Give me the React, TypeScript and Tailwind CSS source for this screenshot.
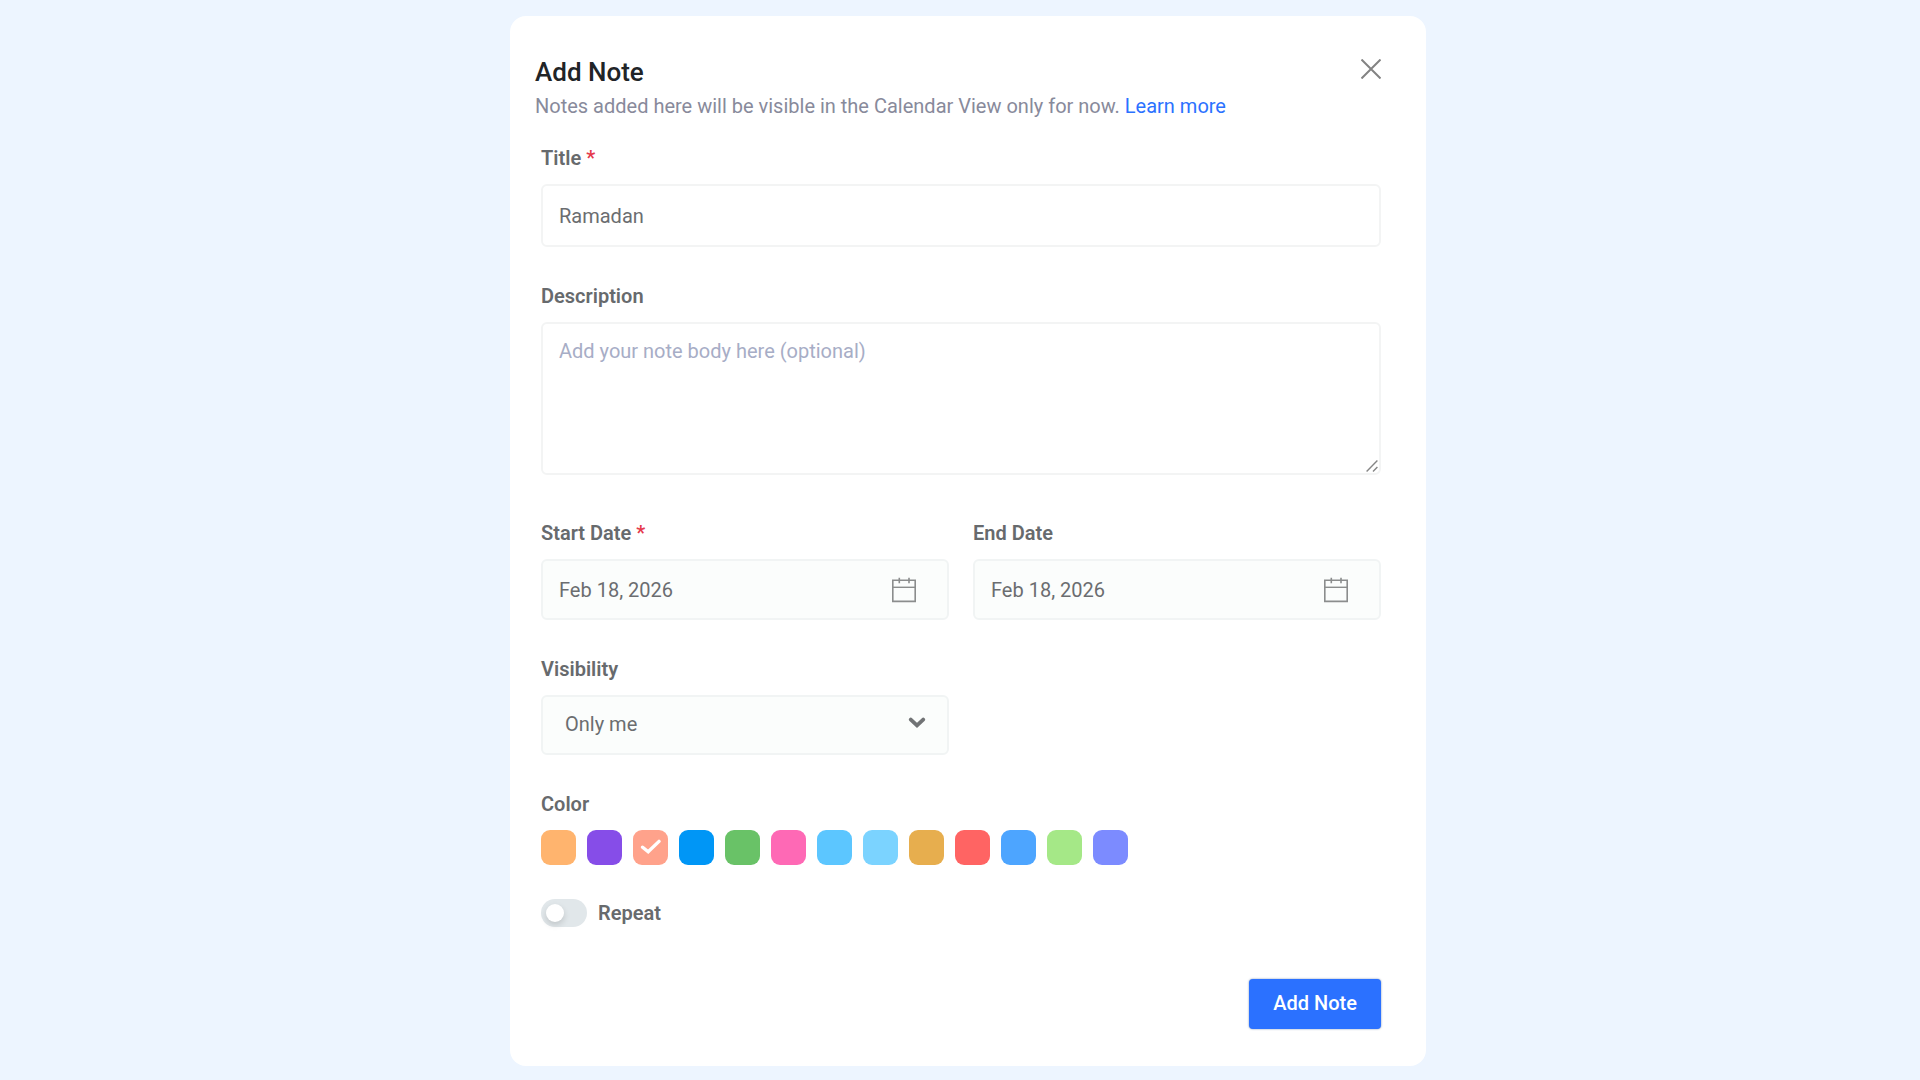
import { useState, type ReactNode } from 'react'
import clsx from 'clsx'

const COLORS = [
  { name: 'Orange', className: 'bg-[#ffb46e]' },
  { name: 'Purple', className: 'bg-[#864de8]' },
  { name: 'Salmon', className: 'bg-[#ffa28b]' },
  { name: 'Blue', className: 'bg-[#0096f6]' },
  { name: 'Green', className: 'bg-[#69c267]' },
  { name: 'Pink', className: 'bg-[#fe69b5]' },
  { name: 'Sky', className: 'bg-[#5cc6ff]' },
  { name: 'Light sky', className: 'bg-[#7bd3ff]' },
  { name: 'Gold', className: 'bg-[#e7ae4e]' },
  { name: 'Red', className: 'bg-[#ff6463]' },
  { name: 'Azure', className: 'bg-[#4da5ff]' },
  { name: 'Lime', className: 'bg-[#a5e887]' },
  { name: 'Indigo', className: 'bg-[#7c8bff]' },
]

function CloseIcon() {
  return (
    <svg viewBox="0 0 20 20" className="size-5" fill="none" stroke="#838383" strokeWidth="2">
      <path d="M0.5 0.5 19.5 19.5M19.5 0.5 0.5 19.5" />
    </svg>
  )
}

function CalendarIcon() {
  return (
    <svg viewBox="0 0 24 26" className="h-[26px] w-6" fill="none" stroke="#8b8d8d">
      <path d="M.8 3.2h22.4v21.2H.8z" strokeWidth="1.6" />
      <path d="M.8 10.3h22.4" strokeWidth="1.4" />
      <path d="M7.3 .8v5.4M17 .8v5.4" strokeWidth="1.6" />
    </svg>
  )
}

function ChevronIcon() {
  return (
    <svg
      viewBox="0 0 18 12"
      className="pointer-events-none absolute top-[22px] right-[23px] h-3 w-[18px]"
      fill="none"
      stroke="#717375"
      strokeWidth="3.8"
    >
      <path d="M2.8 2.6 9 8.4l6.2-5.8" strokeLinecap="round" />
    </svg>
  )
}

function CheckIcon() {
  return (
    <svg
      viewBox="0 0 22 18"
      className="pointer-events-none h-[18px] w-[22px]"
      fill="none"
      stroke="#fff"
      strokeWidth="3.4"
    >
      <path d="M2.6 8.2l5.6 4.6L19 2.4" strokeLinecap="round" />
    </svg>
  )
}

// Larger than the browser's own grip, which is hidden below it
function ResizeGrip() {
  return (
    <svg
      viewBox="0 0 12 12"
      className="pointer-events-none absolute right-[3px] bottom-[3px] size-3"
      fill="none"
      stroke="#858585"
      strokeWidth="1.4"
    >
      <path d="M.6 11.4 11.4.6M7 11.4l4.4-4.4" />
    </svg>
  )
}

function Label({ htmlFor, required, children }: { htmlFor: string; required?: boolean; children: ReactNode }) {
  return (
    <label htmlFor={htmlFor} className="mb-3 block leading-7 font-semibold text-[#676a6d]">
      {children}
      {required && <span className="text-[#e5394b]"> *</span>}
    </label>
  )
}

function DateField({ id, label, required }: { id: string; label: string; required?: boolean }) {
  const [value, setValue] = useState('Feb 18, 2026')

  return (
    <div>
      <Label htmlFor={id} required={required}>
        {label}
      </Label>
      <div className="flex h-[61px] items-center rounded-md border-2 border-[#f1f4f4] bg-[#fbfdfc] pr-[31px] pl-4">
        <input
          id={id}
          type="text"
          value={value}
          onChange={(e) => setValue(e.target.value)}
          className="min-w-0 flex-1 bg-transparent outline-none"
        />
        <button type="button" aria-label={`Pick ${label}`}>
          <CalendarIcon />
        </button>
      </div>
    </div>
  )
}

export default function App() {
  const [title, setTitle] = useState('Ramadan')
  const [color, setColor] = useState('Salmon')
  const [repeat, setRepeat] = useState(false)

  return (
    <main className="flex min-h-screen justify-center bg-[#edf5ff] pt-4 pb-3.5 pl-4 font-['Roboto',sans-serif] text-xl text-[#6b6d70]">
      <section className="w-full max-w-[916px] rounded-2xl bg-white pt-10 pr-[45px] pb-9 pl-[25px]">
        <header className="mb-6 flex items-start justify-between">
          <div>
            <h1 className="text-[26px] leading-8 font-medium text-[#212427]">Add Note</h1>
            <p className="mt-1 leading-7 text-[#888a9b]">
              Notes added here will be visible in the Calendar View only for now.{' '}
              <a href="#learn-more" className="text-[#2b71ff]">
                Learn more
              </a>
            </p>
          </div>
          <button type="button" aria-label="Close" className="mt-[3px] shrink-0">
            <CloseIcon />
          </button>
        </header>

        <form className="pl-1.5" onSubmit={(e) => e.preventDefault()}>
          <Label htmlFor="title" required>
            Title
          </Label>
          <input
            id="title"
            type="text"
            value={title}
            onChange={(e) => setTitle(e.target.value)}
            className="mb-[35px] block h-[63px] w-full rounded-md border-2 border-[#f3f4f4] px-4 outline-none"
          />

          <Label htmlFor="description">Description</Label>
          <div className="relative mb-11">
            <textarea
              id="description"
              placeholder="Add your note body here (optional)"
              className="block h-[153px] w-full resize-y rounded-md border-2 border-[#f3f4f4] px-4 py-[13px] outline-none placeholder:text-[#a7adc6] [&::-webkit-resizer]:bg-transparent"
            />
            <ResizeGrip />
          </div>

          <div className="mb-[35px] grid grid-cols-2 gap-6">
            <DateField id="start-date" label="Start Date" required />
            <DateField id="end-date" label="End Date" />
          </div>

          <div className="mb-[35px] grid grid-cols-2 gap-6">
            <div>
              <Label htmlFor="visibility">Visibility</Label>
              <div className="relative">
                <select
                  id="visibility"
                  className="block h-[60px] w-full appearance-none rounded-md border-2 border-[#f1f4f4] bg-[#fbfdfc] px-[22px] pb-0.5 outline-none"
                >
                  <option>Only me</option>
                  <option>Everyone</option>
                </select>
                <ChevronIcon />
              </div>
            </div>
          </div>

          <fieldset className="mb-[34px]">
            <legend className="mb-3 leading-7 font-semibold text-[#676a6d]">Color</legend>
            <div className="flex flex-wrap gap-[11px]">
              {COLORS.map((c) => (
                <label
                  key={c.name}
                  className={clsx(
                    'flex size-[35px] cursor-pointer items-center justify-center rounded-[9px]',
                    c.className,
                  )}
                >
                  <input
                    type="radio"
                    name="color"
                    aria-label={c.name}
                    checked={color === c.name}
                    onChange={() => setColor(c.name)}
                    className="sr-only"
                  />
                  {color === c.name && <CheckIcon />}
                </label>
              ))}
            </div>
          </fieldset>

          <div className="flex items-center gap-[11px]">
            <input
              id="repeat"
              type="checkbox"
              role="switch"
              checked={repeat}
              onChange={(e) => setRepeat(e.target.checked)}
              className="h-7 w-[46px] cursor-pointer appearance-none rounded-full bg-[#e1e7ea] p-[5px] before:block before:size-[18px] before:rounded-full before:bg-white before:shadow-[0_3px_6px_rgba(0,0,0,0.15)] checked:bg-[#2b71ff] checked:before:ml-auto"
            />
            <label htmlFor="repeat" className="leading-7 font-semibold text-[#676a6d]">
              Repeat
            </label>
          </div>

          <div className="mt-[52px] flex justify-end">
            <button
              type="submit"
              className="h-[50px] rounded-sm bg-[#2b71ff] px-6 pb-0.5 font-medium text-white shadow-[0_0_2px_rgba(20,60,120,0.6)]"
            >
              Add Note
            </button>
          </div>
        </form>
      </section>
    </main>
  )
}
